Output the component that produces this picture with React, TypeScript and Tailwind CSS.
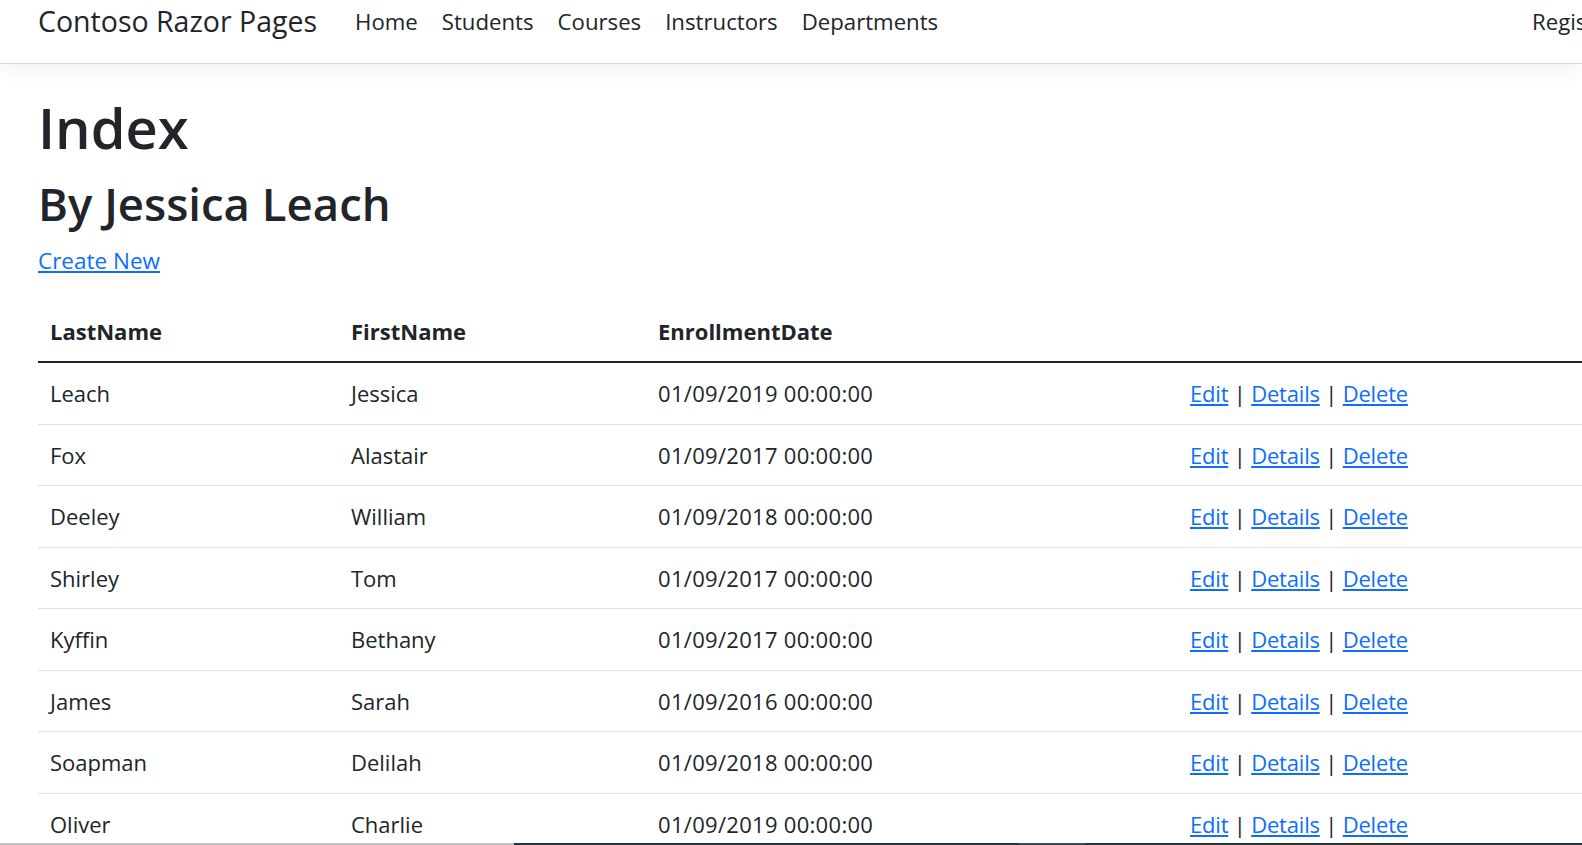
import React from "react";

interface Student {
  lastName: string;
  firstName: string;
  enrollmentDate: string;
}

const students: Student[] = [
  { lastName: "Leach", firstName: "Jessica", enrollmentDate: "01/09/2019 00:00:00" },
  { lastName: "Fox", firstName: "Alastair", enrollmentDate: "01/09/2017 00:00:00" },
  { lastName: "Deeley", firstName: "William", enrollmentDate: "01/09/2018 00:00:00" },
  { lastName: "Shirley", firstName: "Tom", enrollmentDate: "01/09/2017 00:00:00" },
  { lastName: "Kyffin", firstName: "Bethany", enrollmentDate: "01/09/2017 00:00:00" },
  { lastName: "James", firstName: "Sarah", enrollmentDate: "01/09/2016 00:00:00" },
  { lastName: "Soapman", firstName: "Delilah", enrollmentDate: "01/09/2018 00:00:00" },
  { lastName: "Oliver", firstName: "Charlie", enrollmentDate: "01/09/2019 00:00:00" },
];

const navLinks = ["Home", "Students", "Courses", "Instructors", "Departments"];

function Navbar() {
  return (
    <nav className="relative z-10 h-[64px] shrink-0 border-b border-[#dcdcdc] bg-white shadow-[0_6px_18px_rgba(0,0,0,0.05)]">
      <div className="flex h-[42px] items-center pl-[38px]">
        <div className="flex w-[1482px] shrink-0 items-center">
          <a className="mr-[26px] whitespace-nowrap text-[28.5px] leading-[42px] text-[#212529]">Contoso Razor Pages</a>
          <ul className="flex items-center">
            {navLinks.map((link) => (
              <li key={link}>
                <a className="block px-[12px] text-[22.2px] leading-[33px] text-[#212529]">{link}</a>
              </li>
            ))}
          </ul>
        </div>
        <a className="block shrink-0 whitespace-nowrap px-[12px] text-[22.2px] leading-[33px] text-[#212529]">Register</a>
      </div>
    </nav>
  );
}

function StudentTable() {
  return (
    <table className="w-[1600px] table-fixed border-collapse text-left text-[22px] text-[#212529]">
      <colgroup>
        <col className="w-[301px]" />
        <col className="w-[307px]" />
        <col className="w-[532px]" />
        <col />
      </colgroup>
      <thead>
        <tr className="border-b-2 border-[#212529]">
          <th className="px-[12px] py-[12px] font-bold leading-[35px]">LastName</th>
          <th className="px-[12px] py-[12px] font-bold leading-[35px]">FirstName</th>
          <th className="px-[12px] py-[12px] font-bold leading-[35px]">EnrollmentDate</th>
          <th className="px-[12px] py-[12px]"></th>
        </tr>
      </thead>
      <tbody>
        {students.map((s) => (
          <tr key={s.lastName} className="border-b border-[#dee2e6]">
            <td className="px-[12px] py-[12px] leading-[36.5px]">{s.lastName}</td>
            <td className="px-[12px] py-[12px] leading-[36.5px]">{s.firstName}</td>
            <td className="px-[12px] py-[12px] leading-[36.5px] tracking-[0.3px]">{s.enrollmentDate}</td>
            <td className="whitespace-nowrap px-[12px] py-[12px] leading-[36.5px] tracking-[-0.2px]">
              <a className="text-[#0d6efd] underline">Edit</a> |{" "}
              <a className="text-[#0d6efd] underline">Details</a> |{" "}
              <a className="text-[#0d6efd] underline">Delete</a>
            </td>
          </tr>
        ))}
      </tbody>
    </table>
  );
}

export default function App() {
  return (
    <div className="flex h-[845px] w-full flex-col overflow-hidden bg-white font-['Open_Sans',sans-serif] text-[#212529]">
      <Navbar />
      <main className="flex-1 overflow-hidden pl-[38px]">
        <h1 className="mt-[28px] text-[56px] font-semibold leading-[70px]">Index</h1>
        <h2 className="mt-[14px] text-[45.5px] font-semibold leading-[55px]">By Jessica Leach</h2>
        <p className="mt-[13px] text-[22.5px] leading-[33px]">
          <a className="text-[#0d6efd] underline">Create New</a>
        </p>
        <div className="mt-[25px]">
          <StudentTable />
        </div>
      </main>
      {/* bottom scrollbar strip */}
      <div className="flex h-[2px] shrink-0">
        <div className="w-[514px] bg-[#c4c4c4]" />
        <div className="w-[505px] bg-[#26343c]" />
        <div className="w-[66px] bg-[#3d4a52]" />
        <div className="flex-1 bg-[#26343c]" />
      </div>
    </div>
  );
}
